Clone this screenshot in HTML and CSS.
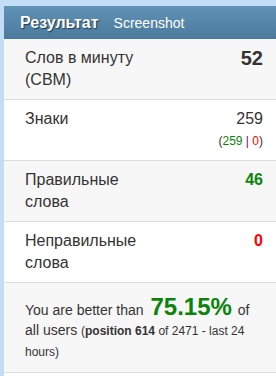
FILE: index.html
```html
<!DOCTYPE html>
<html lang="ru">
<head>
  <meta charset="UTF-8">
  <title>Результат</title>
  <link rel="stylesheet" href="styles.css">
</head>
<body>

  <!-- Result panel -->
  <div class="panel">
    <div class="panel-head">
      <h2>Результат</h2>
      <span class="sub">Screenshot</span>
    </div>

    <div class="row alt">
      <div class="label">Слов в минуту (СВМ)</div>
      <div class="value big">52</div>
    </div>

    <div class="row">
      <div class="label">Знаки</div>
      <div class="value">
        259
        <div class="small">(<span class="ok">259</span> <span class="sep">|</span> <span class="bad">0</span>)</div>
      </div>
    </div>

    <div class="row alt">
      <div class="label">Правильные слова</div>
      <div class="value strong ok">46</div>
    </div>

    <div class="row">
      <div class="label">Неправильные слова</div>
      <div class="value strong bad">0</div>
    </div>

    <div class="row alt summary">
      <p>You are better than <span class="pct">75.15%</span> of all users <small>(<b>position 614</b> of 2471 - last 24 hours)</small></p>
    </div>
  </div>

</body>
</html>
```

FILE: styles.css
```css
* {
  margin: 0;
  padding: 0;
  box-sizing: border-box;
}
body {
  font-family: "Liberation Sans", Arial, sans-serif;
  background-color: #c4ddf7;
  color: #333;
  padding: 6px 0 0 4px;
}
.panel {
  background-color: #fff;
  min-height: calc(100vh - 6px);
}
.panel-head {
  background: linear-gradient(#6193b6, #4a799c);
  color: #fff;
  height: 33px;
  padding-left: 16px;
  display: flex;
  align-items: center;
}
.panel-head h2 {
  font-size: 16px;
  font-weight: bold;
  text-shadow: 1px 1px 1px #1e3a50;
}
.panel-head .sub {
  font-size: 14px;
  margin-left: 15px;
}
.row {
  display: flex;
  justify-content: space-between;
  padding: 8px 13px 8px 21px;
  border-bottom: 1px solid #ddd;
  font-size: 16px;
  line-height: 22px;
}
.row.alt {
  background-color: #f7f7f7;
}
.label {
  width: 140px;
}
.value {
  text-align: right;
}
.big {
  font-size: 20px;
  font-weight: bold;
}
.strong {
  font-weight: bold;
}
.small {
  font-size: 12px;
}
.ok {
  color: #0a840a;
}
.bad {
  color: #f00;
}
.sep {
  color: #800080;
}
.summary {
  font-size: 14px;
  line-height: 20px;
  padding-top: 14px;
  padding-bottom: 10px;
}
.summary small {
  font-size: 12px;
}
.pct {
  font-size: 24px;
  font-weight: bold;
  color: #0a840a;
  margin: 0 2px 0 3px;
}
```
